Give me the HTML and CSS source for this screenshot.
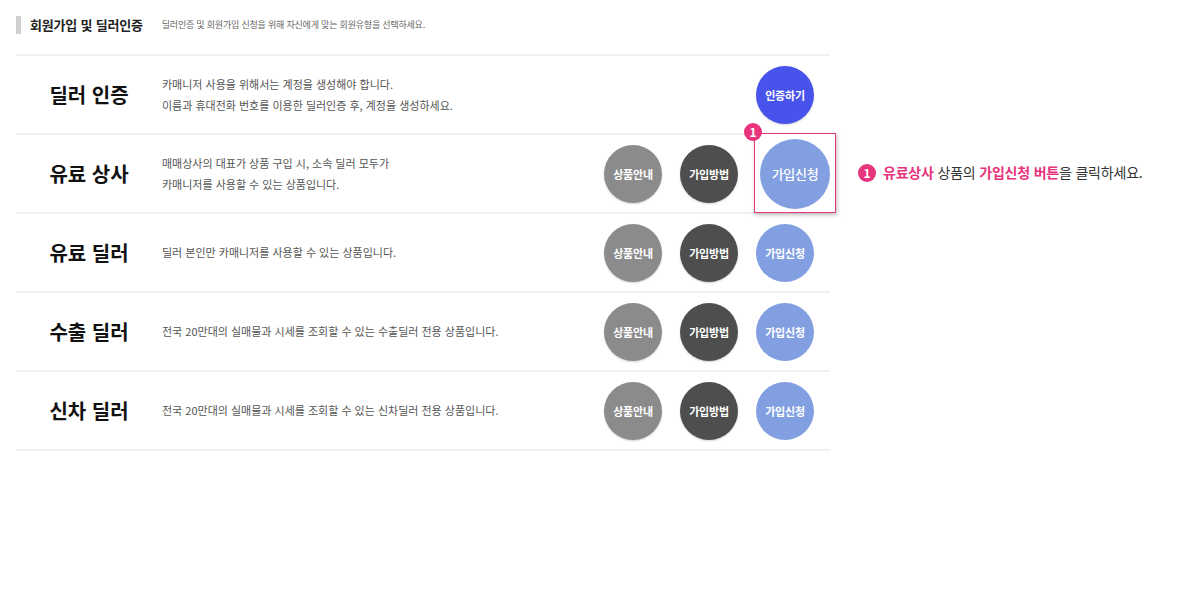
FILE: index.html
```html
<!DOCTYPE html>
<html lang="ko">
<head>
<meta charset="utf-8">
<title>회원가입 및 딜러인증</title>
<link rel="stylesheet" href="styles.css">
</head>
<body>
<div class="page">
  <div class="head">
    <span class="head-bar"></span>
    <h1 class="head-title">회원가입 및 딜러인증</h1>
    <p class="head-desc">딜러인증 및 회원가입 신청을 위해 자신에게 맞는 회원유형을 선택하세요.</p>
  </div>
  <ul class="plans">
    <li class="plan">
      <h2 class="plan-name">딜러 인증</h2>
      <p class="plan-desc">카매니저 사용을 위해서는 계정을 생성해야 합니다.<br>이름과 휴대전화 번호를 이용한 딜러인증 후, 계정을 생성하세요.</p>
      <div class="plan-actions">
        <a class="btn btn-verify">인증하기</a>
      </div>
    </li>
    <li class="plan">
      <h2 class="plan-name">유료 상사</h2>
      <p class="plan-desc">매매상사의 대표가 상품 구입 시, 소속 딜러 모두가<br>카매니저를 사용할 수 있는 상품입니다.</p>
      <div class="plan-actions">
        <a class="btn btn-info">상품안내</a>
        <a class="btn btn-howto">가입방법</a>
        <div class="btn-slot">
          <div class="callout">
            <span class="badge callout-badge">1</span>
            <a class="btn btn-apply btn-large">가입신청</a>
          </div>
          <p class="note"><span class="badge note-badge">1</span><strong class="hl">유료상사</strong> 상품의 <strong class="hl">가입신청 버튼</strong>을 클릭하세요.</p>
        </div>
      </div>
    </li>
    <li class="plan">
      <h2 class="plan-name">유료 딜러</h2>
      <p class="plan-desc">딜러 본인만 카매니저를 사용할 수 있는 상품입니다.</p>
      <div class="plan-actions">
        <a class="btn btn-info">상품안내</a>
        <a class="btn btn-howto">가입방법</a>
        <a class="btn btn-apply">가입신청</a>
      </div>
    </li>
    <li class="plan">
      <h2 class="plan-name">수출 딜러</h2>
      <p class="plan-desc">전국 20만대의 실매물과 시세를 조회할 수 있는 수출딜러 전용 상품입니다.</p>
      <div class="plan-actions">
        <a class="btn btn-info">상품안내</a>
        <a class="btn btn-howto">가입방법</a>
        <a class="btn btn-apply">가입신청</a>
      </div>
    </li>
    <li class="plan">
      <h2 class="plan-name">신차 딜러</h2>
      <p class="plan-desc">전국 20만대의 실매물과 시세를 조회할 수 있는 신차딜러 전용 상품입니다.</p>
      <div class="plan-actions">
        <a class="btn btn-info">상품안내</a>
        <a class="btn btn-howto">가입방법</a>
        <a class="btn btn-apply">가입신청</a>
      </div>
    </li>
  </ul>
</div>
</body>
</html>
```
FILE: styles.css
```css
* { box-sizing: border-box; }
html, body { margin: 0; padding: 0; background: #fff; }
body {
  font-family: "Noto Sans CJK KR", "Noto Sans", sans-serif;
  color: #333;
}
.page {
  width: 830px;
  padding-left: 16px;
}
.head {
  height: 54px;
  display: flex;
  align-items: center;
  padding-bottom: 4px;
}
.head-bar {
  width: 5px;
  height: 18px;
  background: #cfcfcf;
  margin-right: 9px;
}
.head-title {
  margin: 0;
  font-size: 13px;
  font-weight: 700;
  letter-spacing: -0.2px;
  color: #222;
  line-height: 18px;
}
.head-desc {
  margin: 0 0 0 19px;
  font-size: 9px;
  letter-spacing: -0.2px;
  color: #666;
  line-height: 18px;
}
.plans {
  list-style: none;
  margin: 0;
  padding: 0;
  border-top: 2px solid #f0f0f0;
}
.plan {
  height: 79px;
  border-bottom: 2px solid #f0f0f0;
  display: flex;
  align-items: center;
}
.plan-name {
  width: 146px;
  margin: 0;
  text-align: center;
  font-size: 20px;
  font-weight: 700;
  letter-spacing: 0;
  color: #111;
}
.plan-desc {
  margin: 0;
  font-size: 11px;
  letter-spacing: 0;
  line-height: 21px;
  color: #555;
}
.plan-actions {
  margin-left: auto;
  padding-right: 16px;
  display: flex;
  align-items: center;
  gap: 18px;
}
.btn {
  width: 58px;
  height: 58px;
  border-radius: 50%;
  display: flex;
  align-items: center;
  justify-content: center;
  color: #fff;
  font-size: 11px;
  font-weight: 700;
  letter-spacing: -0.2px;
  box-shadow: 0 1px 2px rgba(0,0,0,0.18);
  cursor: pointer;
}
.btn-verify { background: #4853ec; }
.btn-info { background: #8b8b8b; }
.btn-howto { background: #4e4e4e; }
.btn-apply { background: #829fe2; box-shadow: none; }
.btn-slot {
  width: 58px;
  height: 58px;
  position: relative;
}
.callout {
  position: absolute;
  left: -2px;
  top: -12px;
  width: 82px;
  height: 80px;
  border: 1px solid #e8377c;
  background: #fff;
  box-shadow: 1px 2px 4px rgba(0,0,0,0.25);
  padding: 5px;
}
.btn-large {
  width: 70px;
  height: 70px;
  font-size: 13px;
  font-weight: 500;
  letter-spacing: -0.3px;
}
.badge {
  display: inline-flex;
  align-items: center;
  justify-content: center;
  width: 18px;
  height: 18px;
  border-radius: 50%;
  background: #e8337d;
  color: #fff;
  font-size: 12px;
  font-weight: 700;
  line-height: 1;
  letter-spacing: 0;
}
.callout-badge {
  position: absolute;
  left: -11px;
  top: -11px;
}
.note {
  position: absolute;
  left: 102px;
  top: 17px;
  margin: 0;
  white-space: nowrap;
  font-size: 14px;
  letter-spacing: -0.2px;
  color: #333;
  line-height: 20px;
}
.note-badge {
  vertical-align: 0;
  margin-right: 7px;
}
.hl {
  color: #e8337d;
  font-weight: 700;
}
```
